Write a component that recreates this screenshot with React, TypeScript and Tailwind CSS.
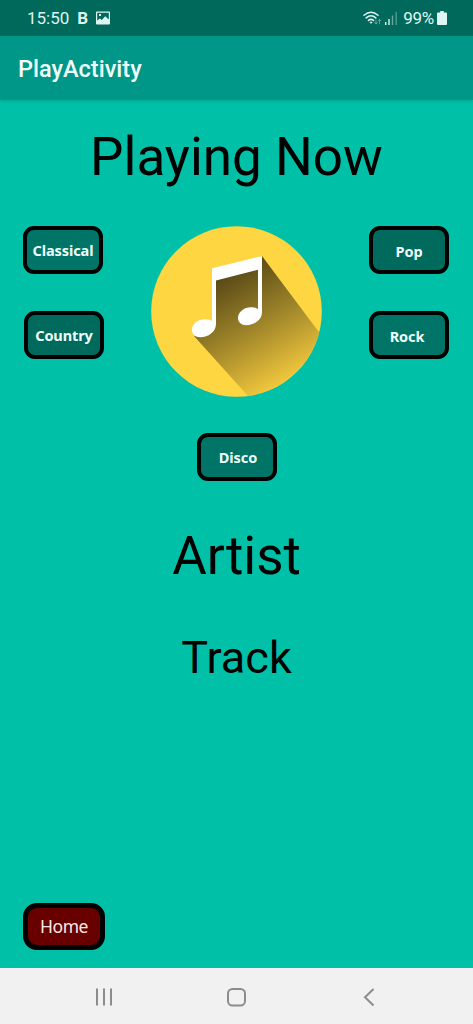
import clsx from 'clsx';

function StatusBar() {
  return (
    <div className="flex h-9 items-center justify-between bg-[#00695c] pl-[27px] pr-[26px] text-[#dff5f1]">
      <div className="flex items-center pt-px">
        <span className="text-[17px] leading-none">15:50</span>
        <span className="ml-[8px] text-[17px] font-bold leading-none">B</span>
        <svg className="mb-px ml-[8px] h-[14px] w-[14px]" viewBox="0 0 14 14">
          <path
            fill="currentColor"
            fillRule="evenodd"
            d="M1 .5h12q1 0 1 1v11q0 1-1 1H1q-1 0-1-1v-11q0-1 1-1ZM1.2 1.8v7.7l2.6-2.1 2 1.5 3.4-3.7 3.6 3.4V1.8ZM3 3h2v2H3Z"
          />
        </svg>
      </div>
      <div className="flex items-center">
        <svg className="h-[16px] w-[19px]" viewBox="0 0 19 16" fill="none" stroke="currentColor" strokeLinecap="round">
          <path strokeWidth="1.5" d="M1 5.2Q8 -.8 15 5.2M3.2 7.9Q8 3.7 12.8 7.9M5.5 10.4Q8 8.3 10.5 10.4" />
          <circle cx="8" cy="12.5" r=".7" fill="currentColor" />
          <path opacity=".4" strokeWidth="1" d="M13 10v3.8M11.7 12.6l1.3 1.3 1.3-1.3M16.5 13.8V9.6M15.2 10.9l1.3-1.3 1.3 1.3" />
        </svg>
        <svg className="ml-[3px] h-[14px] w-[13px]" viewBox="0 0 13 14" fill="currentColor">
          <rect x="0" y="11" width="1.4" height="3" />
          <rect x="3.3" y="8" width="1.4" height="6" />
          <rect x="6.8" y="4.5" width="1.4" height="9.5" opacity=".45" />
          <rect x="10.5" y="1" width="1.4" height="13" opacity=".35" />
        </svg>
        <span className="ml-[5px] pt-px text-[17px] leading-none tracking-[-0.3px]">99%</span>
        <svg className="ml-[3px] h-[14px] w-[10px]" viewBox="0 0 10 14" fill="currentColor">
          <path d="M3.2 0h3.6v1.5H9q1 0 1 1V13q0 1-1 1H1q-1 0-1-1V2.5q0-1 1-1h2.2Z" />
        </svg>
      </div>
    </div>
  );
}

function GenreButton({ label, className }: { label: string; className?: string }) {
  return (
    <button
      type="button"
      className={clsx(
        'flex h-12 w-20 items-center justify-center whitespace-nowrap rounded-[11px] border-4 border-black font-["Noto_Sans",sans-serif] text-[14.5px] font-bold leading-none tracking-[-0.1px] text-[#effffb]',
        className,
      )}
    >
      {label}
    </button>
  );
}

function MusicLogo() {
  return (
    <svg className="h-[171px] w-[171px]" viewBox="0 0 171 171">
      <defs>
        <clipPath id="disc">
          <circle cx="85.5" cy="85.5" r="85.3" />
        </clipPath>
        <linearGradient id="shade" gradientUnits="userSpaceOnUse" x1="66" y1="48" x2="130" y2="160">
          <stop offset="0" stopColor="#524415" />
          <stop offset=".5" stopColor="#9e8429" />
          <stop offset="1" stopColor="#f3c93d" />
        </linearGradient>
      </defs>
      <circle cx="85.5" cy="85.5" r="85.3" fill="#fed641" />
      <path clipPath="url(#disc)" fill="url(#shade)" d="M62 50L111 30L185 129V190H115L43 110L63 101Z" />
      <g fill="#fff">
        <path d="M61 42.2L111 30V86H107V43.8L65 54.5V98H61Z" />
        <path d="M65 94V98C65 106 57 111.2 49.5 111.2C44 111.2 41 108 41 104C41 98 47 93.3 54 93.3C58 93.3 60 94.3 61 95Z" />
        <path d="M111 82V86C111 94 103 99.2 95.5 99.2C90 99.2 87 96 87 92C87 86 93 81.2 100 81.2C104 81.2 106 82.2 107 83Z" />
      </g>
    </svg>
  );
}

function NavBar() {
  return (
    <div className="flex h-14 items-center bg-[#f1f1f1] pl-[95px] pt-[2px] text-[#8c8c8c]">
      <svg className="h-[22px] w-[18px]" viewBox="0 0 18 22" fill="none" stroke="currentColor" strokeWidth="2">
        <path d="M2 2.5v17M9 2.5v17M16 2.5v17" />
      </svg>
      <svg className="ml-[113px] h-[22px] w-[20px]" viewBox="0 0 20 22" fill="none" stroke="currentColor" strokeWidth="2">
        <rect x="2" y="3" width="17" height="16.5" rx="4.5" />
      </svg>
      <svg className="ml-[116px] h-[22px] w-[14px]" viewBox="0 0 14 22" fill="none" stroke="currentColor" strokeWidth="2">
        <path d="M11.5 3L3 11.3L11.5 19.5" />
      </svg>
    </div>
  );
}

export default function App() {
  return (
    <div className="flex h-[1024px] w-[473px] flex-col overflow-hidden bg-[#00c0a7] font-[Roboto,sans-serif]">
      <StatusBar />
      <header className="flex h-16 items-center bg-[#009688] pl-[18px] pt-[4px] shadow-[0_1px_3px_rgba(0,0,0,0.15)]">
        <h1 className="text-[23.5px] font-medium leading-none text-[#f0fffc]">PlayActivity</h1>
      </header>

      <main className="flex flex-1 flex-col items-center text-black">
        <h2 className="mt-[26px] text-[53px] leading-[62px]">Playing Now</h2>

        <div className="mt-[38px] flex w-full items-start justify-between pl-[23px] pr-6">
          <div className="flex flex-col gap-[37px]">
            <GenreButton label="Classical" className="bg-[#007567]" />
            <GenreButton label="Country" className="ml-px bg-[#006a5c]" />
          </div>
          <MusicLogo />
          <div className="flex flex-col gap-[37px]">
            <GenreButton label="Pop" className="bg-[#006a5c] pt-[2px]" />
            <GenreButton label="Rock" className="bg-[#007567] pr-[4px] pt-[2px]" />
          </div>
        </div>

        <GenreButton label="Disco" className="mt-9 bg-[#007567] pl-[3px]" />

        <p className="mt-[44px] text-[53px] leading-[62px]">Artist</p>
        <p className="mt-[45px] text-[45px] leading-[52px]">Track</p>

        <button
          type="button"
          className="mb-[18px] ml-[23px] mt-auto flex h-[47px] w-[82px] items-center justify-center self-start rounded-[14px] border-[5px] border-black bg-[#690000] font-['Noto_Sans',sans-serif] text-[17.5px] leading-none tracking-[-0.4px] text-[#ffe9e6]"
        >
          Home
        </button>
      </main>
      <NavBar />
    </div>
  );
}
